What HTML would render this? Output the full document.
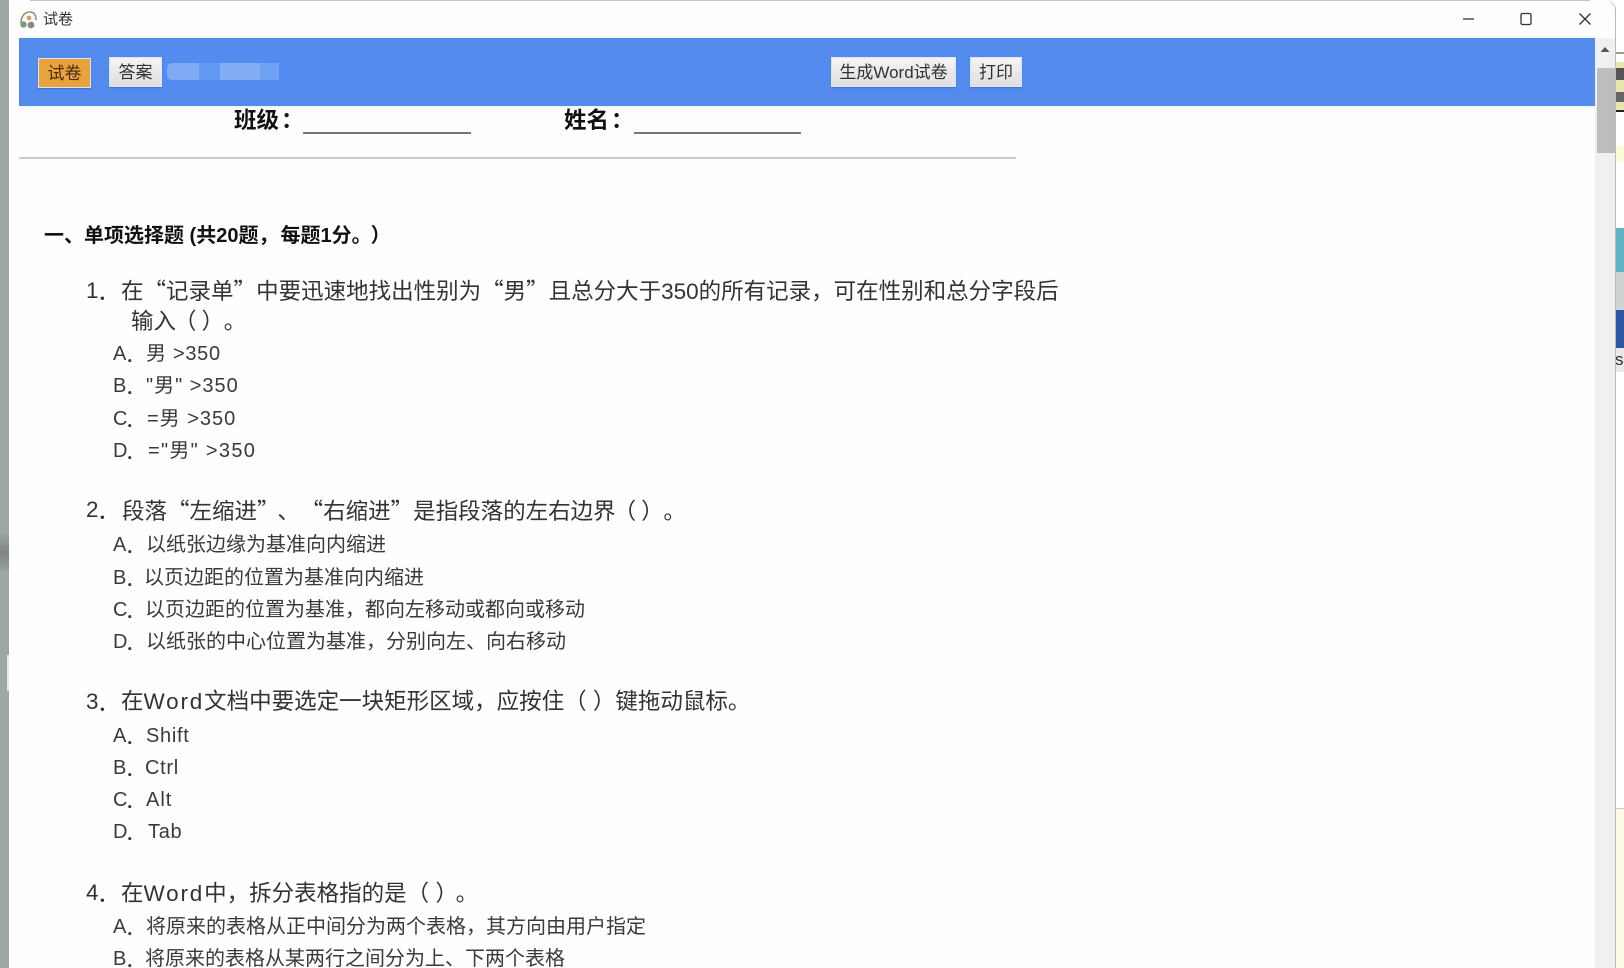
<!DOCTYPE html>
<html lang="zh-CN">
<head>
<meta charset="utf-8">
<title>试卷</title>
<style>
html,body{margin:0;padding:0;background:#fff}
#p{position:relative;width:1624px;height:968px;overflow:hidden;background:#fff;font-family:"Liberation Sans","Noto Sans CJK SC",sans-serif;color:#333}
#p div{position:absolute}
.l{white-space:nowrap;line-height:30px;height:30px;filter:blur(.25px)}
.q{font-size:22.5px;color:#333}
.o{font-size:20px;color:#3a3a3a}
.c{font-family:"Noto Sans CJK SC",sans-serif}
.n{letter-spacing:1px}
.s{letter-spacing:.7px}
.w{letter-spacing:1.8px}
.btn{background:linear-gradient(#f4f4f4,#dfdfdf);text-align:center;color:#333;font-size:17px;line-height:30px;height:28px;box-shadow:0 1px 1px rgba(0,0,0,.2);border:1px solid #dbe6f5;box-sizing:content-box}
</style>
</head>
<body>
<div id="p">
  <!-- outside -->
  <div style="left:0;top:0;width:9px;height:968px;background:#9fa6a6"></div>
  <div style="left:0;top:535px;width:9px;height:36px;background:linear-gradient(#9a9f9f,#7f8585 50%,#9a9f9f)"></div>
  <div style="left:7px;top:655px;width:2px;height:36px;background:#e4e8e8"></div>
  <div style="left:30px;top:0;width:1560px;height:2px;background:#c4c4c4"></div>
  <div style="left:1615px;top:0;width:9px;height:968px;background:#fff"></div>
  <div style="left:1615px;top:52px;width:9px;height:2px;background:#999"></div>
  <div style="left:1615px;top:62px;width:9px;height:48px;background:#e8e6b0"></div>
  <div style="left:1615px;top:68px;width:9px;height:12px;background:#555"></div>
  <div style="left:1615px;top:92px;width:9px;height:10px;background:#666"></div>
  <div style="left:1615px;top:110px;width:9px;height:2px;background:#222"></div>
  <div style="left:1615px;top:146px;width:9px;height:16px;background:#fbfbd8"></div>
  <div style="left:1615px;top:228px;width:9px;height:44px;background:#5fb3c2"></div>
  <div style="left:1615px;top:272px;width:9px;height:38px;background:#cfd2d3"></div>
  <div style="left:1615px;top:310px;width:9px;height:38px;background:#2c57a3"></div>
  <div style="left:1615px;top:348px;width:9px;height:24px;background:#eaeaea"></div>
  <div class="l" style="left:1615px;top:345px;font-size:17px;color:#333;width:9px;overflow:hidden">s.</div>
  <div style="left:1615px;top:808px;width:9px;height:160px;background:#fdfbe6;border-top:1px solid #ccc"></div>

  <!-- window -->
  <div style="left:9px;top:1px;width:1606px;height:967px;background:#fefefe;border-radius:9px 9px 0 0;box-shadow:1px 0 0 #bbb"></div>
  <svg style="position:absolute;left:19px;top:10px" width="19" height="20" viewBox="0 0 19 20">
    <path d="M2 13C2 6 6 2 11 2s6 4 6 8" fill="none" stroke="#9a8f6a" stroke-width="1.6"/>
    <circle cx="4.5" cy="14.5" r="3.2" fill="#7f9a78"/>
    <circle cx="12" cy="15" r="3.4" fill="#8a8a80"/>
    <circle cx="10" cy="8" r="2.4" fill="#c9a86a"/>
  </svg>
  <div class="l" style="left:43px;top:5px;font-size:15px;color:#333">试卷</div>
  <!-- controls -->
  <svg style="position:absolute;left:1455px;top:8px" width="145" height="22" viewBox="0 0 145 22" fill="none" stroke="#333" stroke-width="1.3">
    <path d="M8 11h11"/>
    <rect x="66" y="5.5" width="10" height="11" rx="1.5"/>
    <path d="M124.500 5.500l11 11M135.500 5.500l-11 11"/>
  </svg>

  <!-- toolbar -->
  <div style="left:19px;top:38px;width:1576px;height:68px;background:#538cee;box-shadow:0 1px 1px #dff4f6,0 -1px 1px #e6f8f8"></div>
  <div class="btn" style="left:38px;top:58px;width:51px;background:#e9a33c;color:#4a2a10">试卷</div>
  <div class="btn" style="left:109px;top:57px;width:51px">答案</div>
  <div style="left:167px;top:63px;width:32px;height:17px;background:#7fabf5;border-radius:5px 0 0 5px"></div>
  <div style="left:199px;top:63px;width:21px;height:17px;background:#629af2"></div>
  <div style="left:220px;top:63px;width:40px;height:17px;background:#83aef5"></div>
  <div style="left:260px;top:63px;width:19px;height:17px;background:#6fa2f3"></div>
  <div class="btn" style="left:831px;top:57px;width:123px">生成Word试卷</div>
  <div class="btn" style="left:970px;top:57px;width:50px">打印</div>

  <!-- scrollbar -->
  <div style="left:1595px;top:38px;width:20px;height:930px;background:#f0f0f0"></div>
  <svg style="position:absolute;left:1600px;top:46px" width="10" height="7" viewBox="0 0 10 7"><path d="M5 1L9.500 6H.5z" fill="#555"/></svg>
  <div style="left:1597px;top:68px;width:18px;height:85px;background:#bdbdbd"></div>

  <!-- header -->
  <div class="l" style="left:234px;top:104px;font-size:22.500px;font-weight:bold;color:#111">班级<span class="c" style="margin-left:2px">：</span></div>
  <div style="left:303px;top:132px;width:168px;height:2px;background:#777"></div>
  <div class="l" style="left:564px;top:104px;font-size:22.500px;font-weight:bold;color:#111">姓名<span class="c" style="margin-left:2px">：</span></div>
  <div style="left:634px;top:132px;width:167px;height:2px;background:#777"></div>
  <div style="left:19px;top:157px;width:997px;height:2px;background:#cbcbcb"></div>

  <div class="l" style="left:44px;top:221px;font-size:20px;font-weight:bold;color:#111">一、单项选择题 (共20题，<span style="margin-left:2px">每题1分。</span><span style="margin-left:9px">）</span></div>

  <!-- Q1 -->
  <div class="l q" style="left:86px;top:276px">1</div><div class="l q c" style="left:97px;top:276px">．</div>
  <div class="l q" style="left:121px;top:275px">在<span class="c">“</span>记录单<span class="c">”</span>中要迅速地找出性别为<span class="c">“</span>男<span class="c">”</span>且总分大于350的所有记录，可在性别和总分字段后</div>
  <div class="l q" style="left:131px;top:307px">输入<span style="margin-left:-2px">（</span><span style="margin-left:5px">）</span><span style="margin-left:11px">。</span></div>
  <div class="l o" style="left:113px;top:339px">A</div><div class="l o c" style="left:125px;top:339px">．</div><div class="l o s" style="left:146px;top:339px">男 &gt;350</div>
  <div class="l o" style="left:113px;top:371px">B</div><div class="l o c" style="left:125px;top:371px">．</div><div class="l o n" style="left:146px;top:371px">"男" &gt;350</div>
  <div class="l o" style="left:113px;top:404px">C</div><div class="l o c" style="left:125px;top:404px">．</div><div class="l o n" style="left:147px;top:404px">=男 &gt;350</div>
  <div class="l o" style="left:113px;top:436px">D</div><div class="l o c" style="left:125px;top:436px">．</div><div class="l o" style="left:148px;top:436px;letter-spacing:1.3px">="男" &gt;350</div>

  <!-- Q2 -->
  <div class="l q" style="left:86px;top:495px">2</div><div class="l q c" style="left:97px;top:495px">．</div>
  <div class="l q" style="left:122px;top:495px">段落<span class="c">“</span>左缩进<span class="c">”</span><span class="c" style="margin-left:9px">、</span><span class="c" style="margin-left:12px">“</span>右缩进<span class="c">”</span>是指段落的左右边界<span style="margin-left:-2px">（</span><span style="margin-left:5px">）</span><span style="margin-left:11px">。</span></div>
  <div class="l o" style="left:113px;top:530px">A</div><div class="l o c" style="left:125px;top:530px">．</div><div class="l o" style="left:146px;top:530px">以纸张边缘为基准向内缩进</div>
  <div class="l o" style="left:113px;top:563px">B</div><div class="l o c" style="left:125px;top:563px">．</div><div class="l o" style="left:144px;top:563px">以页边距的位置为基准向内缩进</div>
  <div class="l o" style="left:113px;top:595px">C</div><div class="l o c" style="left:125px;top:595px">．</div><div class="l o" style="left:145px;top:595px">以页边距的位置为基准，都向左移动或都向或移动</div>
  <div class="l o" style="left:113px;top:627px">D</div><div class="l o c" style="left:125px;top:627px">．</div><div class="l o" style="left:146px;top:627px">以纸张的中心位置为基准，分别向左、向右移动</div>

  <!-- Q3 -->
  <div class="l q" style="left:86px;top:687px">3</div><div class="l q c" style="left:97px;top:687px">．</div>
  <div class="l q" style="left:121px;top:687px">在<span class="w">Word</span>文档中要选定一块矩形区域，应按住（ ）键拖动鼠标。</div>
  <div class="l o" style="left:113px;top:721px">A</div><div class="l o c" style="left:125px;top:721px">．</div><div class="l o s" style="left:146px;top:721px">Shift</div>
  <div class="l o" style="left:113px;top:753px">B</div><div class="l o c" style="left:125px;top:753px">．</div><div class="l o s" style="left:145px;top:753px">Ctrl</div>
  <div class="l o" style="left:113px;top:785px">C</div><div class="l o c" style="left:125px;top:785px">．</div><div class="l o n" style="left:146px;top:785px">Alt</div>
  <div class="l o" style="left:113px;top:817px">D</div><div class="l o c" style="left:125px;top:817px">．</div><div class="l o s" style="left:148px;top:817px">Tab</div>

  <!-- Q4 -->
  <div class="l q" style="left:86px;top:878px">4</div><div class="l q c" style="left:97px;top:878px">．</div>
  <div class="l q" style="left:121px;top:879px">在<span class="w">Word</span>中，拆分表格指的是（ ）<span style="margin-left:9px">。</span></div>
  <div class="l o" style="left:113px;top:912px">A</div><div class="l o c" style="left:125px;top:912px">．</div><div class="l o" style="left:146px;top:912px">将原来的表格从正中间分为两个表格，其方向由用户指定</div>
  <div class="l o" style="left:113px;top:944px">B</div><div class="l o c" style="left:125px;top:944px">．</div><div class="l o" style="left:145px;top:944px">将原来的表格从某两行之间分为上、下两个表格</div>
</div>
</body>
</html>
